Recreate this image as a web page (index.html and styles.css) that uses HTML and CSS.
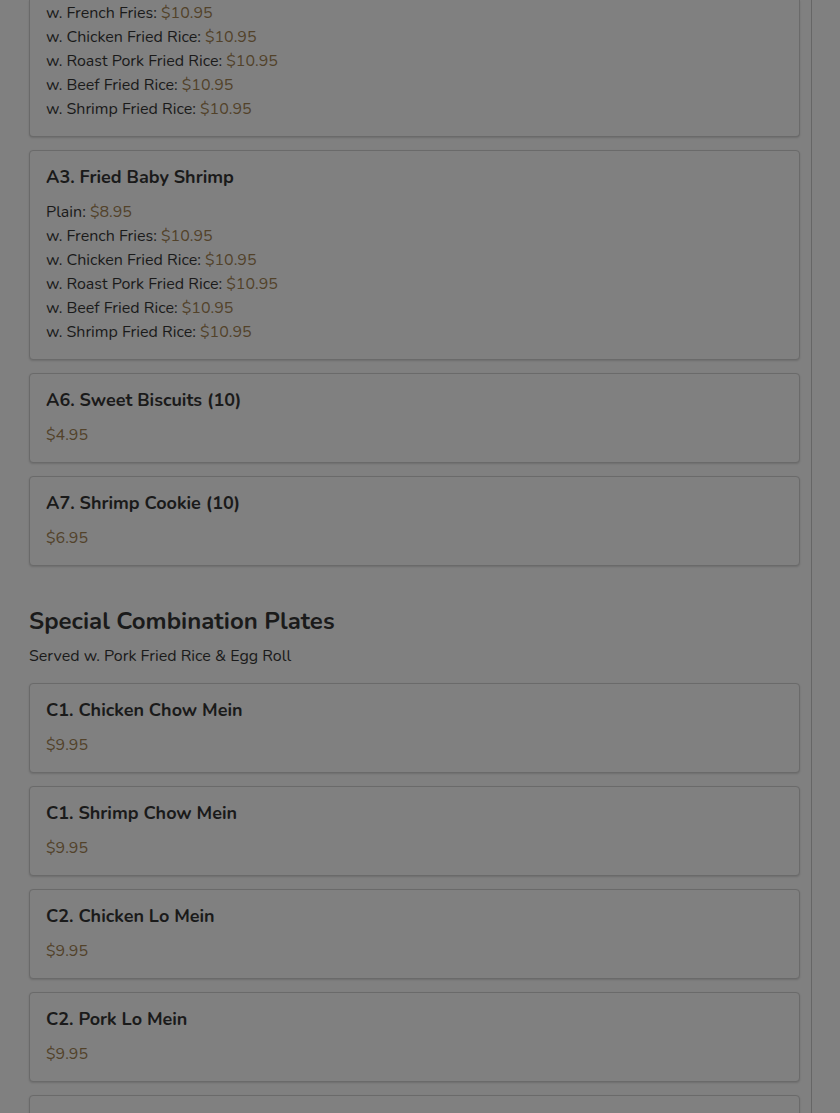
FILE: index.html
```html
<!DOCTYPE html>
<html lang="en">
<head>
	<meta charset="UTF-8">
	<title>Menu</title>
	<link rel="stylesheet" href="styles.css">
</head>
<body>
	<div class="page">
		<div class="menu">
			<div class="item item-cut">
				<ul class="prices">
					<li>w. French Fries: <span class="price">$10.95</span></li>
					<li>w. Chicken Fried Rice: <span class="price">$10.95</span></li>
					<li>w. Roast Pork Fried Rice: <span class="price">$10.95</span></li>
					<li>w. Beef Fried Rice: <span class="price">$10.95</span></li>
					<li>w. Shrimp Fried Rice: <span class="price">$10.95</span></li>
				</ul>
			</div>
			<div class="item">
				<h3 class="item-name">A3. Fried Baby Shrimp</h3>
				<ul class="prices">
					<li>Plain: <span class="price">$8.95</span></li>
					<li>w. French Fries: <span class="price">$10.95</span></li>
					<li>w. Chicken Fried Rice: <span class="price">$10.95</span></li>
					<li>w. Roast Pork Fried Rice: <span class="price">$10.95</span></li>
					<li>w. Beef Fried Rice: <span class="price">$10.95</span></li>
					<li>w. Shrimp Fried Rice: <span class="price">$10.95</span></li>
				</ul>
			</div>
			<div class="item">
				<h3 class="item-name">A6. Sweet Biscuits (10)</h3>
				<p class="price">$4.95</p>
			</div>
			<div class="item">
				<h3 class="item-name">A7. Shrimp Cookie (10)</h3>
				<p class="price">$6.95</p>
			</div>
		</div>

		<div class="menu">
			<h2 class="section-title">Special Combination Plates</h2>
			<p class="section-note">Served w. Pork Fried Rice &amp; Egg Roll</p>
			<div class="item">
				<h3 class="item-name">C1. Chicken Chow Mein</h3>
				<p class="price">$9.95</p>
			</div>
			<div class="item">
				<h3 class="item-name">C1. Shrimp Chow Mein</h3>
				<p class="price">$9.95</p>
			</div>
			<div class="item">
				<h3 class="item-name">C2. Chicken Lo Mein</h3>
				<p class="price">$9.95</p>
			</div>
			<div class="item">
				<h3 class="item-name">C2. Pork Lo Mein</h3>
				<p class="price">$9.95</p>
			</div>
			<div class="item">
				<h3 class="item-name">C3. Beef Lo Mein</h3>
				<p class="price">$9.95</p>
			</div>
		</div>
	</div>
</body>
</html>
```

FILE: styles.css
```css
ul,li,p,h2,h3{list-style: none;margin:0;padding:0;}
html,body{margin:0;padding:0;background-color: #808080;}
body{font-family: Nunito, "Noto Sans", "Open Sans", sans-serif;font-size: 16px;line-height: 24px;color: #1a1a1a;overflow: hidden;height: 1113px;}
.page{width: 771px;height: 100%;padding: 0 11px 0 29px;border-right: 1px solid #666;}
.menu{display: flex;flex-direction: column;gap: 13px;}
.menu + .menu{margin-top: 41px;gap: 0;}
.item{border: 1px solid #6a6a6a;border-radius: 4px;padding: 16px 16px 15px;background-color: #808080;box-shadow: 0 1px 2px rgba(0,0,0,.15);}
.menu + .menu .item{margin-bottom: 13px;}
.item-cut{border-top: 0;border-radius: 0 0 4px 4px;padding-top: 1px;}
.item-name{font-size: 18px;line-height: 20px;font-weight: 700;margin-bottom: 13px;}
.price{color: #52422a;}
.section-title{font-size: 24px;line-height: 29px;font-weight: 700;margin-bottom: 8px;}
.section-note{margin-bottom: 15px;}
```
